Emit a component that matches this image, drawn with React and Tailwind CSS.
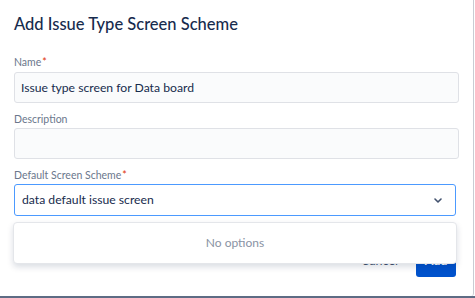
import React from 'react';

const font = "font-['Lato','Open_Sans',sans-serif]";
const labelClass = "block text-[10.5px] leading-[16px] text-[#6B778C]";
const inputClass = "w-full h-[31px] rounded-[3px] border border-[#DFE1E6] bg-[#FAFBFC] px-[6px] text-[12.2px] text-[#172B4D] outline-none";

const App = () => {
  return (
    <div className={`w-[475px] h-[298px] bg-white overflow-hidden flex flex-col ${font}`}>
      <div className="relative flex-1 w-[474px] rounded-br-[3px] border-r border-[#c9ccd3] bg-white px-[14px] pt-[12px]">
        <h1 className="text-[16.5px] leading-[24px] font-medium text-[#172B4D]">Add Issue Type Screen Scheme</h1>

        <div className="mt-[18px]">
          <label className={labelClass}>Name<span className="text-[#DE350B] ml-[1px]">*</span></label>
          <input type="text" defaultValue="Issue type screen for Data board" className={`${inputClass} mt-[2px]`} />
        </div>

        <div className="mt-[8px]">
          <label className={labelClass}>Description</label>
          <input type="text" className={`${inputClass} mt-[1px]`} />
        </div>

        <div className="mt-[8px] relative w-[442px]">
          <label className={labelClass}>Default Screen Scheme<span className="text-[#DE350B] ml-[1px]">*</span></label>
          <div className="mt-[1px] h-[32px] rounded-[3px] border border-[#4C9AFF] bg-white flex items-center justify-between pl-[7px] pr-[13px]">
            <span className="text-[12.2px] text-[#172B4D]">data default issue screen</span>
            <svg width="8" height="5" viewBox="0 0 8 5" fill="none">
              <path d="M1 1l3 3 3-3" stroke="#42526E" strokeWidth="1.6" strokeLinecap="round" strokeLinejoin="round" />
            </svg>
          </div>

          <div className="absolute left-[-1px] right-[-1px] top-[55px] z-10 h-[42px] rounded-[4px] border border-[#e4e6ea] bg-white shadow-[0_3px_6px_rgba(9,30,66,0.15)] flex items-center justify-center">
            <span className="text-[12px] text-[#8993A4]">No options</span>
          </div>

          <div className="mt-[29px] flex justify-end items-center gap-[16px]">
            <button className="text-[12.5px] text-[#42526E] px-[2px] h-[32px]">Cancel</button>
            <button className="h-[32px] w-[40px] rounded-[3px] bg-[#0052CC] text-[12.5px] font-bold text-white">Add</button>
          </div>
        </div>
      </div>
      <div className="h-[2px] bg-[#5E6C84]" />
    </div>
  );
};

export default App;
